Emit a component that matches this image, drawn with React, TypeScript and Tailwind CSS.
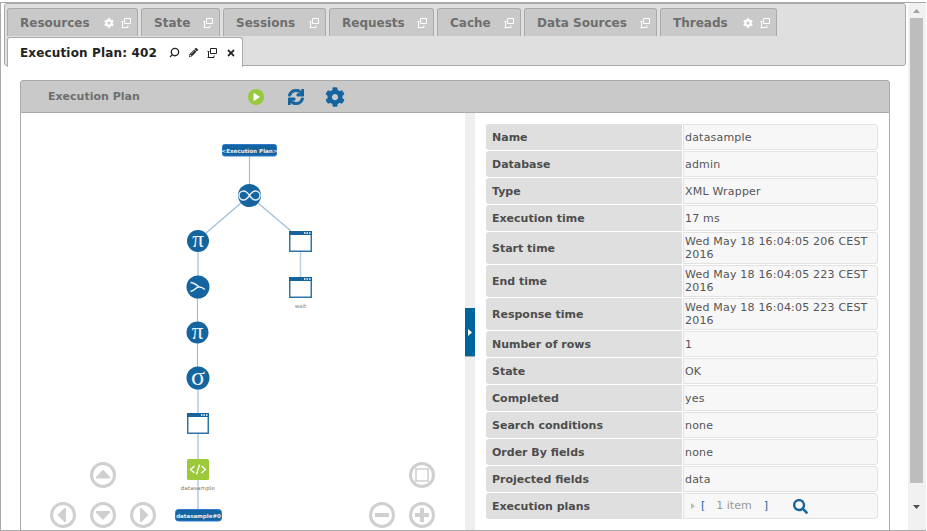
import { FaCog, FaPencilAlt, FaSearch, FaSync, FaTimes } from 'react-icons/fa';
import { Search } from 'lucide-react';

const FONT = 'font-["DejaVu_Sans",Verdana,sans-serif]';

const TABS = [
  { label: 'Resources', width: 'w-[131px]', gear: true },
  { label: 'State', width: 'w-[79px]', gear: false },
  { label: 'Sessions', width: 'w-[103px]', gear: false },
  { label: 'Requests', width: 'w-[105px]', gear: false },
  { label: 'Cache', width: 'w-[84px]', gear: false },
  { label: 'Data Sources', width: 'w-[133px]', gear: false },
  { label: 'Threads', width: 'w-[117px]', gear: true },
];

const ROWS: { label: string; value: string; tall?: boolean }[] = [
  { label: 'Name', value: 'datasample' },
  { label: 'Database', value: 'admin' },
  { label: 'Type', value: 'XML Wrapper' },
  { label: 'Execution time', value: '17 ms' },
  { label: 'Start time', value: 'Wed May 18 16:04:05 206 CEST 2016', tall: true },
  { label: 'End time', value: 'Wed May 18 16:04:05 223 CEST 2016', tall: true },
  { label: 'Response time', value: 'Wed May 18 16:04:05 223 CEST 2016', tall: true },
  { label: 'Number of rows', value: '1' },
  { label: 'State', value: 'OK' },
  { label: 'Completed', value: 'yes' },
  { label: 'Search conditions', value: 'none' },
  { label: 'Order By fields', value: 'none' },
  { label: 'Projected fields', value: 'data' },
];

const BLUE = '#14659f';
const EDGE = '#9dbfd8';

function PopOut() {
  return (
    <svg width="10" height="10" viewBox="0 0 10 10">
      <path d="M3.500 .5h6v5h-6z" fill="none" stroke="currentColor" />
      <path d="M1.500 3v6.500h5.500V7.500M.5 3.500h2M.5 9.500h2" fill="none" stroke="currentColor" />
    </svg>
  );
}

function Tab({ label, width, gear }: { label: string; width: string; gear: boolean }) {
  return (
    <div className={`${width} h-[28px] shrink-0 flex items-center justify-between pl-[12px] pr-[6px] bg-[#c9c9c9] border border-b-0 border-[#aaa] rounded-t-[3px]`}>
      <span className="text-[12px] font-bold text-[#6e6e6e]">{label}</span>
      <span className="flex items-center gap-[4px] text-white">
        {gear && <FaCog size={10} className="mr-[3px]" />}
        <PopOut />
      </span>
    </div>
  );
}

function WindowNode({ x, y, w = 23, h = 21 }: { x: number; y: number; w?: number; h?: number }) {
  return (
    <g>
      <rect x={x + 0.75} y={y + 0.75} width={w - 1.5} height={h - 1.5} fill="#fff" stroke="#2f76a8" strokeWidth="1.500" />
      <rect x={x} y={y} width={w} height={4} fill={BLUE} />
      <path d={`M${x + w - 8} ${y + 2}h1.500M${x + w - 5.500} ${y + 2}h1.500M${x + w - 3} ${y + 2}h1.500`} stroke="#fff" strokeWidth="1.500" />
    </g>
  );
}

function GlyphNode({ cx, cy, r, glyph, size, dy }: { cx: number; cy: number; r: number; glyph: string; size: number; dy: number }) {
  return (
    <g>
      <circle cx={cx} cy={cy} r={r} fill={BLUE} />
      <text x={cx} y={cy + dy} textAnchor="middle" fontSize={size} fontFamily="Liberation Serif, serif" fill="#eef3f7">
        {glyph}
      </text>
    </g>
  );
}

function NavButton({ cx, cy, children }: { cx: number; cy: number; children: React.ReactNode }) {
  return (
    <g transform={`translate(${cx} ${cy})`}>
      <circle r="11.500" fill="#fff" stroke="#cfcfcf" strokeWidth="3" />
      <g fill="#cfcfcf">{children}</g>
    </g>
  );
}

// viewBox uses page coordinates, canvas starts at (21,113)
function PlanGraph() {
  return (
    <svg width="444" height="417" viewBox="21 113 444 417" className="block">
      <g stroke={EDGE} strokeWidth="1.200" fill="none">
        <path d="M249.500 156V185" />
        <path d="M241 203L206 233" />
        <path d="M258 203L291 231" />
        <path d="M300.500 252V277" stroke="#b7d0e2" strokeWidth="1.500" />
        <path d="M198 252V277M197.500 297V322M197.500 343V367M198 389V413M198 434V459M198 480V509" />
      </g>

      <rect x="222.500" y="144.500" width="54" height="11.500" rx="2" fill={BLUE} stroke="#2f79d0" />
      <text x="249.500" y="152.500" textAnchor="middle" fontSize="5.600" fontWeight="700" fill="#e8f0f6">&lt;Execution Plan&gt;</text>

      <circle cx="249.500" cy="195.500" r="11.500" fill={BLUE} />
      <path d="M249.500 195.500c-2-3-4-4.500-6-4.500a4.500 4.500 0 0 0 0 9c2 0 4-1.500 6-4.500s4-4.500 6-4.500a4.500 4.500 0 0 1 0 9c-2 0-4-1.500-6-4.500z" fill="none" stroke="#e6eef4" strokeWidth="1.400" />

      <GlyphNode cx={198} cy={241} r={11} glyph="π" size={23} dy={6} />

      <WindowNode x={289} y={231} />
      <WindowNode x={289} y={277} />
      <text x="300.500" y="308" textAnchor="middle" fontSize="5.500" fill="#888">wait</text>

      <circle cx="198" cy="287" r="11.500" fill={BLUE} />
      <path d="M190.500 291.500c4-.5 5-4 8-4.500 2-.3 4 .5 6.500 2.500M190.500 282.500c3 0 5 1.500 8 4" fill="none" stroke="#eef3f7" strokeWidth="1.500" />

      <GlyphNode cx={197.500} cy={332.500} r={11} glyph="π" size={23} dy={6} />
      <GlyphNode cx={198} cy={378} r={11.500} glyph="σ" size={26} dy={7} />

      <WindowNode x={187} y={413} w={22} />

      <rect x="187" y="459" width="22" height="21" rx="1.500" fill="#9bc93a" />
      <path d="M194.500 466l-4 3.500 4 3.500M201.500 466l4 3.500-4 3.500M199.500 464.500l-3 10" fill="none" stroke="#fff" strokeWidth="1.300" />
      <text x="198" y="490" textAnchor="middle" fontSize="5.500" letterSpacing=".2" fill="#777">datasample</text>

      <rect x="175.500" y="509.500" width="46" height="11.500" rx="3" fill={BLUE} stroke="#2f79d0" />
      <text x="198.500" y="517.500" textAnchor="middle" fontSize="5.500" fontWeight="700" fill="#e8f0f6">datasample#0</text>

      <NavButton cx={103} cy={475}>
        <path d="M-7 2L0-5.500 7 2V3.500H-7z" />
      </NavButton>
      <NavButton cx={63} cy={515}>
        <path d="M1.500-7L-5.500 0l7 7H3V-7z" />
      </NavButton>
      <NavButton cx={103} cy={515}>
        <path d="M-7-2.500L0 5l7-7.500V-4H-7z" />
      </NavButton>
      <NavButton cx={143} cy={515}>
        <path d="M-1.500-7L5.500 0l-7 7H-3V-7z" />
      </NavButton>
      <NavButton cx={422} cy={475}>
        <rect x="-6" y="-6" width="12" height="12" fill="none" stroke="#cfcfcf" strokeWidth="1.500" />
        <path d="M-8-8l3 3M8-8L5-5M-8 8l3-3M8 8L5 5" stroke="#cfcfcf" fill="none" />
      </NavButton>
      <NavButton cx={382} cy={515}>
        <rect x="-7" y="-2" width="14" height="4" />
      </NavButton>
      <NavButton cx={422} cy={515}>
        <path d="M-2-7h4v5h5v4H2v5h-4V2h-5v-4h5z" />
      </NavButton>
    </svg>
  );
}

function DetailRow({ label, value, tall }: { label: string; value: string; tall?: boolean }) {
  return (
    <div className={`flex gap-px ${tall ? 'h-[32px]' : 'h-[26px]'}`}>
      <div className="w-[196px] flex items-center pl-[6px] pt-[2px] bg-[#dfdfdf] rounded-l-[3px] text-[11px] font-bold text-[#4d4d4d]">
        {label}
      </div>
      <div className="w-[195px] flex items-center pl-[1px] pr-[3px] bg-[#f7f7f7] border border-[#e2e2e2] rounded-r-[3px] text-[11px] leading-[13px] tracking-[.2px] text-[#555]">
        {value}
      </div>
    </div>
  );
}

export default function App() {
  return (
    <div className={`${FONT} w-[927px] h-[531px] overflow-hidden bg-white pt-[2px]`}>
      <div className="w-[926px] h-[529px] flex border-t border-l border-b border-[#aaa]">
        <div className="flex-1 min-w-0 flex flex-col pl-[3px]">
          <div className="w-[902px] h-[63px] shrink-0 bg-[#dfdfdf] border border-[#aaa] rounded-[3px] pl-[2px] pt-[4px] relative">
            <div className="flex gap-[3px]">
              {TABS.map((t) => (
                <Tab key={t.label} {...t} />
              ))}
            </div>
            <div className="absolute left-[2px] top-[33px] w-[236px] h-[30px] flex items-center justify-between pl-[12px] pr-[6px] bg-white border border-b-0 border-[#aaa] rounded-t-[3px]">
              <span className="text-[12px] font-bold text-[#222] tracking-[.15px]">Execution Plan: 402</span>
              <span className="flex items-center gap-[9px] text-[#222]">
                <Search size={11} strokeWidth={3} className="-scale-x-100" />
                <FaPencilAlt size={9} />
                <PopOut />
                <FaTimes size={10} />
              </span>
            </div>
          </div>

          <div className="mt-[14px] ml-[16px] w-[870px] flex-1 min-h-0 flex flex-col">
            <div className="h-[33px] shrink-0 flex items-center pl-[27px] bg-[#c9c9c9] border border-[#aaa] rounded-t-[3px]">
              <span className="w-[200px] pt-[2px] text-[11px] font-bold text-[#6e6e6e]">Execution Plan</span>
              <svg width="16" height="16" viewBox="0 0 16 16">
                <circle cx="8" cy="8" r="8" fill="#97c93c" />
                <path d="M5.500 3.800L12 8l-6.500 4.200z" fill="#fff" />
              </svg>
              <FaSync size={16} color={BLUE} stroke={BLUE} strokeWidth={30} className="ml-[24px]" />
              <FaCog size={20} color={BLUE} className="ml-[21px]" />
            </div>
            <div className="flex-1 min-h-0 flex border-x border-[#aaa]">
              <div className="w-[444px] shrink-0 overflow-hidden">
                <PlanGraph />
              </div>
              <div className="w-[10px] shrink-0 bg-[#eee] flex flex-col pt-[195px]">
                <div className="h-[49px] flex items-center justify-center bg-[#00649c] border-b border-[#aaa]">
                  <svg width="4" height="7" viewBox="0 0 4 7">
                    <path d="M0 0l4 3.500-4 3.500z" fill="#fff" />
                  </svg>
                </div>
              </div>
              <div className="flex-1 min-w-0 pl-[11px] pt-[11px] flex flex-col gap-px">
                {ROWS.map((r) => (
                  <DetailRow key={r.label} {...r} />
                ))}
                <div className="flex gap-px h-[26px]">
                  <div className="w-[196px] flex items-center pl-[6px] pt-[2px] bg-[#dfdfdf] rounded-l-[3px] text-[11px] font-bold text-[#4d4d4d]">
                    Execution plans
                  </div>
                  <div className="w-[195px] flex items-center pl-[7px] bg-[#f7f7f7] border border-[#e2e2e2] rounded-r-[3px] text-[11px] text-[#999]">
                    <svg width="4" height="6" viewBox="0 0 4 6">
                      <path d="M0 0l4 3-4 3z" fill="#bbb" />
                    </svg>
                    <span className="ml-[6px] text-[#14659f]">[</span>
                    <span className="ml-[11px]">1 item</span>
                    <span className="ml-[12px] text-[#14659f]">]</span>
                    <FaSearch size={15} color={BLUE} className="ml-[25px]" />
                  </div>
                </div>
              </div>
            </div>
          </div>
        </div>

        <div className="w-[18px] shrink-0 flex flex-col pl-[2px] bg-[#f1f1f1]">
          <div className="w-[13px] h-[15px] flex items-center justify-center shrink-0">
            <svg width="7" height="4" viewBox="0 0 7 4">
              <path d="M3.500 0L7 4H0z" fill="#a3a3a3" />
            </svg>
          </div>
          <div className="w-[13px] h-[465px] shrink-0 bg-[#bdbdbd]" />
          <div className="w-[13px] flex-1 flex items-center justify-center">
            <svg width="7" height="4" viewBox="0 0 7 4">
              <path d="M3.500 4L7 0H0z" fill="#505050" />
            </svg>
          </div>
        </div>
      </div>
    </div>
  );
}
